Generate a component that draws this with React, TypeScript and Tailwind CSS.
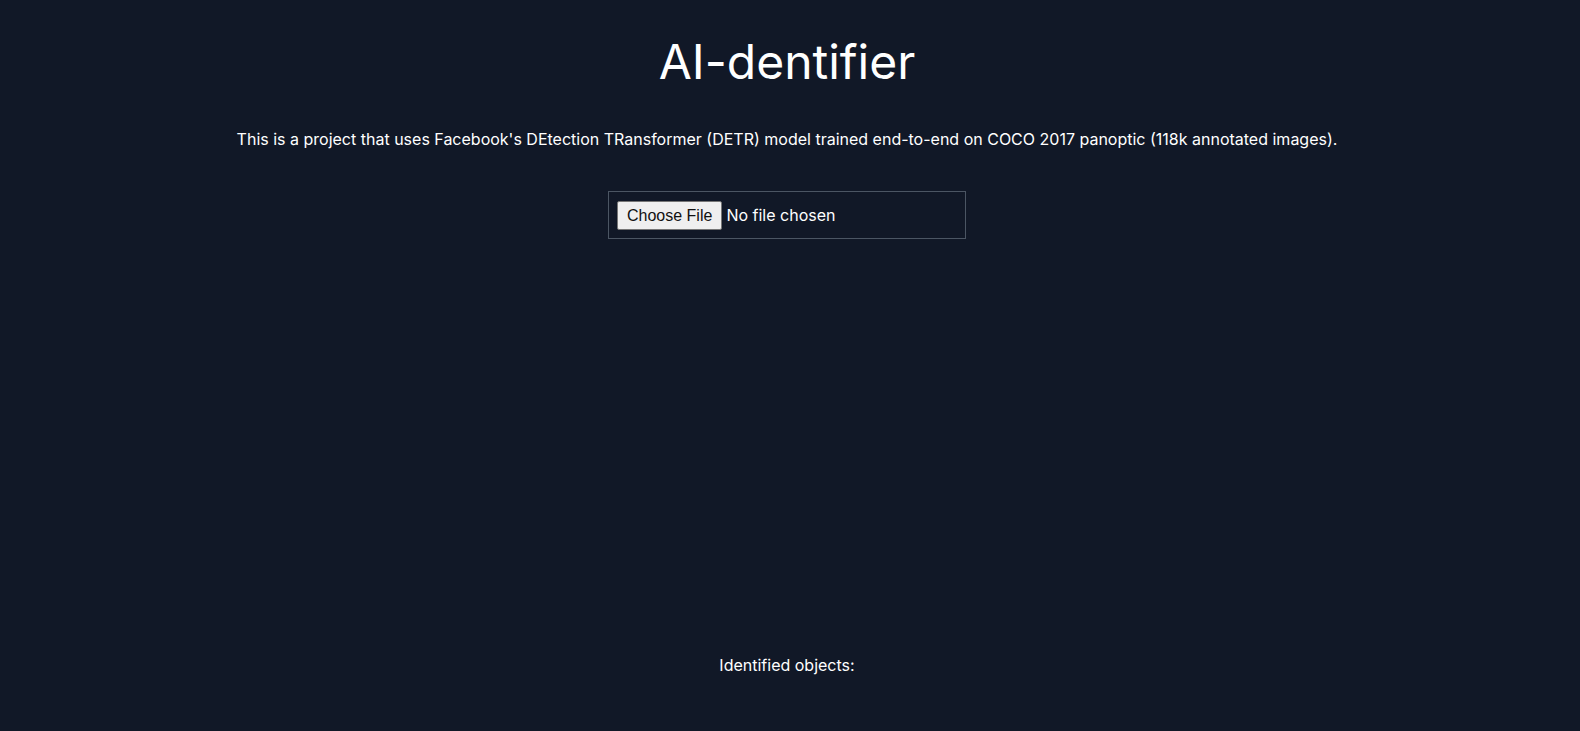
import React from "react";

export default function App() {
  return (
    <div className="min-h-screen w-full bg-[#111827] text-white font-['Inter',sans-serif] flex flex-col items-center pr-[6px]">
      <h1 className="mt-[34px] text-[48px] leading-[56px] font-normal">AI-dentifier</h1>
      <p className="mt-[37px] text-[16px] leading-6">
        This is a project that uses Facebook's DEtection TRansformer (DETR) model trained end-to-end on COCO 2017 panoptic (118k annotated images).
      </p>
      <div className="mt-[40px] w-[358px] h-[48px] border border-[#4b5563] flex items-center px-[8px]">
        <input
          type="file"
          className="text-[16px] text-white file:font-['Liberation_Sans',Arial,sans-serif] file:text-[16px] file:leading-[19px] file:text-[#111] file:bg-[#efefef] file:border file:border-[#767676] file:rounded-[2px] file:px-[9px] file:py-[4px] file:mr-[4px]"
        />
      </div>
      <div className="h-[414px]" />
      <p className="text-[16px] leading-6">Identified objects:</p>
    </div>
  );
}
